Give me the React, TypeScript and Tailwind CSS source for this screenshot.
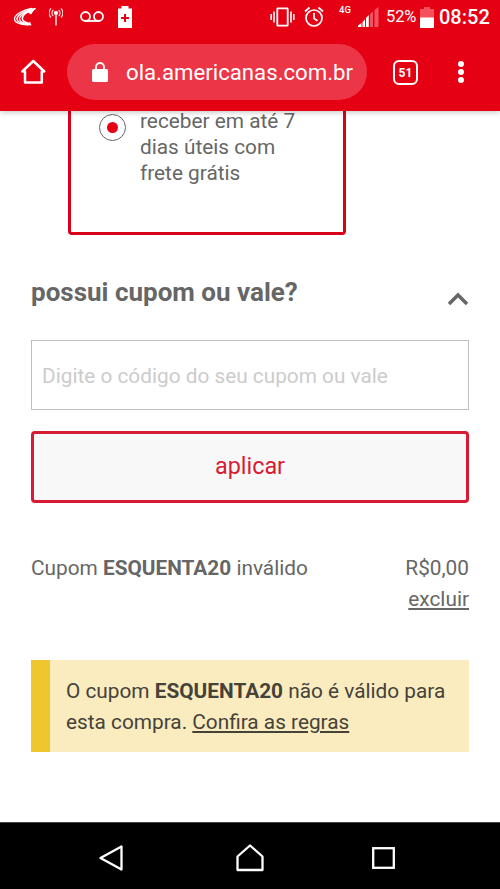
import { useState } from "react"

function StatusBar() {
  return (
    <div className="flex h-[34px] shrink-0 items-center">
      {/* carrier swirl */}
      <svg className="ml-[13px] h-[20px] w-[24px]" viewBox="0 0 24 20" fill="none" stroke="#fff">
        <path d="M19 1.500C10 2.500 1.500 7.500 1.500 12c0 4 5 5.500 14 6" strokeWidth="1.300" />
        <path d="M20 2.500C11 4 4 8 4 12c0 3 4 4.800 11 5.500" strokeWidth="1.500" />
        <path d="M21 3C13 4.500 6.500 8.500 6.500 12c0 2.600 3 4 9 5" strokeWidth="1.300" />
        <path d="M22.500 1.500C14 4.500 9.300 8.500 9.300 11.500c0 2.500 3 4 6.500 5" strokeWidth="1.500" />
        <path d="M16 1.800c3-.8 5-.8 7-.3-2 1.200-3.200 3.500-5 6l-3-2z" fill="#fff" stroke="none" />
        <path d="M17 14.500l1.500 4-4.500-.5z" fill="#fff" stroke="none" />
      </svg>
      {/* antenna */}
      <svg className="ml-[12px] h-[20px] w-[14px]" viewBox="0 0 14 20" fill="none" stroke="#ffe6e4" strokeWidth="1.100">
        <circle cx="7" cy="6" r="1.600" fill="#fff" />
        <path d="M7 7v11.500" strokeWidth="1.500" />
        <path d="M4.300 9a4 4 0 0 1 0-6M9.700 9a4 4 0 0 0 0-6M2 10.700a6.800 6.800 0 0 1 0-9.400M12 10.700a6.800 6.800 0 0 0 0-9.400" />
      </svg>
      {/* voicemail */}
      <svg className="ml-[17px] h-[12px] w-[24px]" viewBox="0 0 24 12" fill="none" stroke="#fff" strokeWidth="1.800">
        <circle cx="5.500" cy="5.500" r="4.500" />
        <circle cx="18.500" cy="5.500" r="4.500" />
        <path d="M5.500 10h13" />
      </svg>
      {/* battery saver */}
      <svg className="ml-[14px] h-[22px] w-[14px]" viewBox="0 0 14 22">
        <path d="M3.500 0h7v2.500H14V22H0V2.500h3.500z" fill="#fff" />
        <path d="M7 8v8M3 12h8" stroke="#e60014" strokeWidth="2" />
      </svg>

      {/* vibrate */}
      <svg className="ml-[138px] h-[20px] w-[25px]" viewBox="0 0 25 20" fill="none" stroke="#fff">
        <rect x="7.300" y="1.300" width="10.400" height="17.400" rx=".5" strokeWidth="1.800" />
        <path d="M4 4.500v11M21 4.500v11M1.200 7v6M23.800 7v6" strokeWidth="1.600" />
      </svg>
      {/* alarm */}
      <svg className="ml-[9px] h-[22px] w-[20px]" viewBox="0 0 20 22" fill="none" stroke="#fff" strokeWidth="1.700">
        <circle cx="10" cy="12" r="8" />
        <path d="M10 7v5.500l3.500 2.300M1 5.500L5.500 1.500M19 5.500L14.500 1.500" />
      </svg>
      <span className="-mt-[14px] ml-[15px] w-[13px] text-[9.500px] font-medium leading-none text-white">4G</span>
      {/* signal strength */}
      <svg className="ml-[6px] h-[20px] w-[21px]" viewBox="0 0 21 20">
        <path d="M0 20v-1.500L3.500 16v4zM4.500 20v-5L7 12.500V20zM8 20v-9l2.800-3v12z" fill="#fff" />
        <path d="M12 20V7l3-2.500V20zM16.500 20V3L20.500 0v20z" fill="#f4515c" />
      </svg>
      <span className="ml-[7px] mt-[1px] w-[31px] whitespace-nowrap text-[16.500px] tracking-[-0.1px] text-white">52%</span>
      <svg className="ml-[3px] h-[21px] w-[14px]" viewBox="0 0 14 21">
        <path d="M4 0h6v2h4v9H0V2h4z" fill="#f4515c" />
        <path d="M0 10.500h14V21H0z" fill="#fff" />
      </svg>
      <span className="ml-[5px] whitespace-nowrap text-[20px] font-medium text-white">08:52</span>
    </div>
  )
}

function Toolbar() {
  return (
    <div className="flex h-[77px] shrink-0 items-start pt-[10px]">
      <svg className="ml-[20px] mt-[15px] h-[26px] w-[27px]" viewBox="0 0 27 26" fill="none" stroke="#fff" strokeWidth="2.500" strokeLinejoin="round">
        <path d="M5 12.500H2.300L13.300 2l11 10.500H21.800V23.500H5z" />
      </svg>
      <div className="ml-[20px] flex h-[56px] w-[300px] items-center rounded-full bg-[#ec3546] pl-[25px] text-white">
        <svg className="h-[20px] w-[16px] shrink-0" viewBox="0 0 16 20" fill="none">
          <rect y="7" width="16" height="13" rx="1.500" fill="#fff" />
          <path d="M4 8V5a4 4 0 0 1 8 0v3" stroke="#fff" strokeWidth="1.800" />
        </svg>
        <span className="ml-[18px] mt-[2px] whitespace-nowrap text-[22.200px]">ola.americanas.com.br</span>
      </div>
      <button className="ml-[26px] mt-[16px] flex h-[25px] w-[25px] items-center justify-center rounded-[6px] border-2 border-white text-[12px] font-bold leading-none text-white">
        51
      </button>
      <button className="ml-[40px] mt-[17px] flex flex-col gap-[2px]">
        <span className="h-[6px] w-[6px] rounded-full bg-white" />
        <span className="h-[6px] w-[6px] rounded-full bg-white" />
        <span className="h-[6px] w-[6px] rounded-full bg-white" />
      </button>
    </div>
  )
}

function NavigationBar() {
  return (
    <div className="flex h-[67px] shrink-0 items-center border-t border-[#444] bg-black px-[98px] pt-[3px]">
      <svg className="h-[28px] w-[26px]" viewBox="0 0 26 28" fill="none" stroke="#fff" strokeWidth="2.300" strokeLinejoin="round">
        <path d="M23.500 2.500v23L2.500 14z" />
      </svg>
      <svg className="ml-[112px] h-[28px] w-[28px]" viewBox="0 0 28 28" fill="none" stroke="#fff" strokeWidth="2.300" strokeLinejoin="round">
        <path d="M1.500 12.500L14 1.500l12.500 11V26h-25z" />
      </svg>
      <svg className="ml-[108px] h-[22px] w-[23px]" viewBox="0 0 23 22" fill="none" stroke="#fff" strokeWidth="2.300">
        <rect x="1.200" y="1.200" width="20.600" height="19.600" />
      </svg>
    </div>
  )
}

export default function App() {
  const [coupon, setCoupon] = useState("")

  return (
    <div className="flex h-[889px] w-[500px] flex-col overflow-hidden bg-white font-['Roboto',sans-serif]">
      <header className="relative z-10 bg-[#e60014] shadow-[0_1px_6px_rgba(0,0,0,0.25)]">
        <StatusBar />
        <Toolbar />
      </header>

      <main className="flex min-h-0 flex-1 flex-col px-[31px] text-[#666]">
        {/* Delivery option */}
        <div className="ml-[37px] flex h-[124px] w-[278px] shrink-0 rounded-b-[4px] border-3 border-t-0 border-[#d9001b] pl-[28px]">
          <div className="mt-[3px] flex h-[27px] w-[27px] shrink-0 items-center justify-center rounded-full border border-[#666]">
            <span className="h-[11px] w-[11px] rounded-full bg-[#e60014]" />
          </div>
          <p className="ml-[14px] -mt-[3px] whitespace-nowrap text-[20.800px] leading-[26px]">
            receber em até 7
            <br />
            dias úteis com
            <br />
            frete grátis
          </p>
        </div>

        <div className="mt-[41px] flex h-[32px] shrink-0 items-center justify-between">
          <h2 className="whitespace-nowrap text-[26px] font-bold leading-[32px]">possui cupom ou vale?</h2>
          <svg className="mt-[13px] h-[14px] w-[22px]" viewBox="0 0 22 14" fill="none" stroke="#666" strokeWidth="3.500">
            <path d="M2 12l9-9 9 9" />
          </svg>
        </div>

        <input
          className="mt-[32px] h-[70px] w-[438px] shrink-0 border border-[#bebebe] px-[10px] pt-[1px] text-[20.800px] outline-none placeholder:text-[#ccc]"
          placeholder="Digite o código do seu cupom ou vale"
          value={coupon}
          onChange={(e) => setCoupon(e.target.value)}
        />
        <button className="mt-[21px] h-[72px] w-[438px] shrink-0 rounded-[4px] border-3 border-[#d81b34] bg-[#f8f8f8] text-[23.400px] text-[#d81b34]">
          aplicar
        </button>

        <div className="mt-[50px] flex justify-between text-[20.800px] leading-[31px]">
          <p className="whitespace-nowrap">
            Cupom <b>ESQUENTA20</b> inválido
          </p>
          <div className="text-right">
            <p>R$0,00</p>
            <a className="underline">excluir</a>
          </div>
        </div>

        <div className="mt-[45px] h-[92px] w-[438px] shrink-0 border-l-[19px] border-[#f0c62f] bg-[#faecbf] pl-[16px] pt-[16px] text-[20.800px] leading-[31px] text-[#45423a]">
          <p className="whitespace-nowrap">
            O cupom <b>ESQUENTA20</b> não é válido para
            <br />
            esta compra. <a className="underline">Confira as regras</a>
          </p>
        </div>
      </main>

      <NavigationBar />
    </div>
  )
}
